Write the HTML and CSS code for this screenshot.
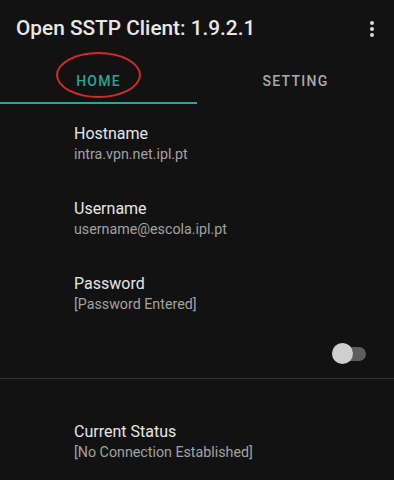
FILE: index.html
```html
<!DOCTYPE html>
<html lang="en">
<head>
<meta charset="utf-8">
<title>Open SSTP Client</title>
<link rel="stylesheet" href="styles.css">
</head>
<body>
<div class="app">
  <header class="appbar">
    <h1 class="title">Open SSTP Client: 1.9.2.1</h1>
    <div class="kebab" aria-label="More options">
      <span class="dot"></span><span class="dot"></span><span class="dot"></span>
    </div>
  </header>
  <nav class="tabs">
    <div class="tab active">
      <span class="tab-label">HOME</span>
      <span class="mark"></span>
    </div>
    <div class="tab">
      <span class="tab-label">SETTING</span>
    </div>
  </nav>
  <main class="content">
    <section class="items">
      <div class="item">
        <div class="label">Hostname</div>
        <div class="value">intra.vpn.net.ipl.pt</div>
      </div>
      <div class="item">
        <div class="label">Username</div>
        <div class="value">username@escola.ipl.pt</div>
      </div>
      <div class="item">
        <div class="label">Password</div>
        <div class="value">[Password Entered]</div>
      </div>
    </section>
    <div class="switch-row">
      <div class="switch">
        <span class="track"></span>
        <span class="thumb"></span>
      </div>
    </div>
    <div class="divider"></div>
    <div class="item status">
      <div class="label">Current Status</div>
      <div class="value">[No Connection Established]</div>
    </div>
  </main>
</div>
</body>
</html>
```

FILE: styles.css
```css
* { box-sizing: border-box; }
html, body {
  margin: 0;
  padding: 0;
  background: #121212;
}
body {
  font-family: Roboto, "Liberation Sans", sans-serif;
  color: #e6e6e6;
  width: 394px;
  height: 480px;
  overflow: hidden;
}
.appbar {
  height: 56px;
  display: flex;
  align-items: center;
  justify-content: space-between;
  padding: 0 16px 0 16px;
}
.title {
  margin: 0;
  font-size: 20.8px;
  font-weight: 500;
  color: #e8e8e8;
  line-height: 24px;
  padding-bottom: 1px;
}
.kebab {
  width: 12px;
  display: flex;
  flex-direction: column;
  align-items: center;
  gap: 2px;
  margin-right: 0;
  padding-top: 2px;
}
.dot {
  width: 4px;
  height: 4px;
  border-radius: 50%;
  background: #d8d8d8;
}
.tabs {
  display: flex;
  height: 48px;
}
.tab {
  flex: 1;
  position: relative;
  display: flex;
  align-items: center;
  justify-content: center;
  font-size: 14px;
  font-weight: 500;
  letter-spacing: 1.25px;
  color: #ababab;
  padding-top: 1px;
}
.tab.active {
  color: #2ba596;
  border-bottom: 2px solid #2ba596;
  padding-top: 3px;
}
.mark {
  position: absolute;
  left: 56px;
  top: -4px;
  width: 85px;
  height: 46px;
  border: 2px solid #d42a2a;
  border-radius: 50%;
}
.content {
  padding-top: 20.5px;
}
.items {
  display: flex;
  flex-direction: column;
  gap: 34px;
}
.item {
  padding-left: 74px;
}
.label {
  font-size: 16px;
  line-height: 18px;
  color: #e6e6e6;
}
.value {
  font-size: 14.25px;
  line-height: 23px;
  color: #a3a3a3;
}
.switch-row {
  display: flex;
  justify-content: flex-end;
  padding: 27.5px 28px 14px 0;
}
.switch {
  position: relative;
  width: 34px;
  height: 21px;
  display: flex;
  align-items: center;
}
.track {
  width: 34px;
  height: 14px;
  border-radius: 7px;
  background: #5e5e5e;
}
.thumb {
  position: absolute;
  left: 0;
  top: 0;
  width: 21px;
  height: 21px;
  border-radius: 50%;
  background: #cfcfcf;
}
.divider {
  height: 1px;
  background: #333333;
}
.status {
  padding-top: 43.5px;
}
```
